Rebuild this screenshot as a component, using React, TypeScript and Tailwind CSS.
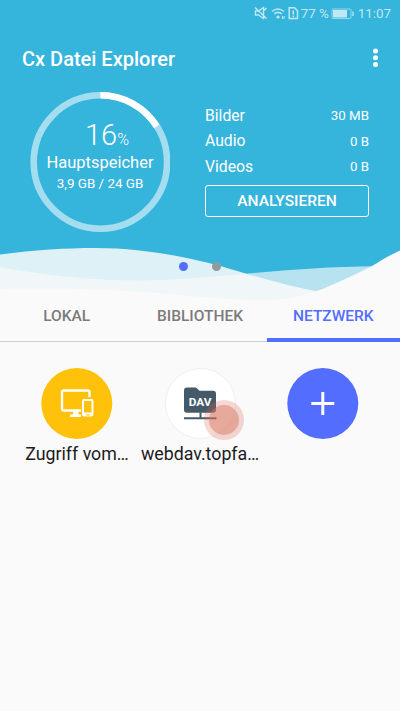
import { useState } from "react"

interface UsageItem {
  label: string
  value: string
}

const usage: UsageItem[] = [
  { label: "Bilder", value: "30 MB" },
  { label: "Audio", value: "0 B" },
  { label: "Videos", value: "0 B" },
]

const tabs = ["LOKAL", "BIBLIOTHEK", "NETZWERK"]

function StatusBar() {
  return (
    <div className="flex h-7 items-center justify-end pr-[9px] text-[13.4px] text-[#c1e7f3]">
      <svg width="47" height="16" viewBox="254 6 47 16" fill="none" stroke="currentColor" strokeWidth="1.2">
        {/* muted speaker */}
        <path d="M255.5 11h3l5-3.5v11l-5-3.5h-3zM255 7.500l11.500 11M266.500 8l-2.500 2.500" strokeWidth="1.400" />
        {/* wifi */}
        <path d="M272 11.500q6-5 12 0M274.300 14q3.700-3.300 7.500 0" strokeWidth="1.5" />
        <circle cx="278" cy="17" r="1.6" fill="currentColor" stroke="none" />
        <path d="M282.500 16v3M284 16v3" strokeWidth="1" />
        {/* sim warning */}
        <path d="M289.200 7.800h5.300l3 3v7.700h-8.300z" strokeWidth="1.500" />
        <path d="M293.300 10.500v4M293.300 15.500v1.500" strokeWidth="1.500" />
      </svg>
      <span className="w-[28px] whitespace-nowrap">77 %</span>
      <svg className="ml-[2px] mr-[3px]" width="24" height="12" viewBox="0 0 24 12" fill="none">
        <rect x="1" y="1" width="19" height="9.500" rx="1" stroke="currentColor" strokeOpacity="0.700" />
        <rect x="2" y="2" width="14" height="7.500" fill="currentColor" />
        <path d="M22 3.500v4.500" stroke="currentColor" strokeWidth="1.300" />
      </svg>
      <span>11:07</span>
    </div>
  )
}

function Waves() {
  return (
    <svg className="absolute left-0 top-[240px]" width="400" height="64" viewBox="0 240 400 64">
      <path
        d="M0 254.500C35 250 65 248 95 248C134 248 170 254 200 261C222 266 237 271 252 275.500C276 282 297 288 322 292L322 304H0z"
        fill="#fafafa"
        fillOpacity="0.860"
      />
      <path
        d="M0 267.500C40 274 86 280.500 140 280.500C205 280.500 285 266.500 376 266.200V304H0z"
        fill="#fafafa"
        fillOpacity="0.660"
      />
      <path
        d="M0 289C70 287.500 125 290 180 295C215 298.500 250 301.500 280 299.500C297 298 314 292.500 326 287.500C341 281 357 274 372 266C381 260.500 390 255 400 250.500V304H0z"
        fill="#fafafa"
      />
    </svg>
  )
}

function StorageRing({ percent }: { percent: number }) {
  const radius = 66.7
  const length = 2 * Math.PI * radius

  return (
    <div className="relative h-[140px] w-[140px]">
      <svg className="absolute inset-0" width="140" height="140" viewBox="0 0 140 140" fill="none">
        <circle cx="70.400" cy="70" r={radius} stroke="#fff" strokeOpacity="0.550" strokeWidth="6.600" />
        <circle
          cx="70.400"
          cy="70"
          r={radius}
          stroke="#fff"
          strokeWidth="6.600"
          strokeDasharray={`${(length * percent) / 100} ${length}`}
          transform="rotate(-90 70.4 70)"
        />
      </svg>
      <div className="relative flex flex-col items-center whitespace-nowrap pt-[26px]">
        <div className="ml-[14px] flex h-[34px] items-baseline leading-[34px]">
          <span className="text-[29px] font-light">{percent}</span>
          <span className="text-[16px] font-light">%</span>
        </div>
        <div className="text-[16.5px] leading-[22px]">Hauptspeicher</div>
        <div className="text-[13.4px] leading-[19px]">3,9 GB / 24 GB</div>
      </div>
    </div>
  )
}

export default function App() {
  const [active, setActive] = useState("NETZWERK")

  return (
    <div className="h-[711px] w-[400px] overflow-hidden bg-[#fafafa] font-['Roboto',sans-serif]">
      <header className="relative h-[291px] text-white">
        <div className="absolute inset-x-0 top-0 h-[304px] bg-[#35b4dc]" />
        <Waves />
        <div className="relative">
          <StatusBar />
          <div className="flex h-[60px] items-center justify-between pl-[22px] pr-[22px]">
            <h1 className="pt-px text-[20px] font-medium">Cx Datei Explorer</h1>
            <svg width="5" height="20" viewBox="0 0 5 20" fill="#fff">
              <circle cx="2.500" cy="3" r="2.500" />
              <circle cx="2.500" cy="9.700" r="2.500" />
              <circle cx="2.500" cy="16.400" r="2.500" />
            </svg>
          </div>
          <div className="flex pl-[30px] pt-[4px]">
            <StorageRing percent={16} />
            <div className="ml-[35px] w-[164px] pt-[11px]">
              {usage.map((item) => (
                <div key={item.label} className="flex h-[25.5px] items-center justify-between">
                  <span className="text-[15.7px]">{item.label}</span>
                  <span className="pt-px text-[13.3px]">{item.value}</span>
                </div>
              ))}
              <button className="mt-[5px] block h-[32px] w-full rounded-[3px] border border-white pt-[2px] text-[15.5px] font-medium">
                ANALYSIEREN
              </button>
            </div>
          </div>
          <div className="flex justify-center gap-[24px] pt-[30px]">
            <span className="h-[9px] w-[9px] rounded-full bg-[#536dfe]" />
            <span className="h-[9px] w-[9px] rounded-full bg-[#8f9b9f]" />
          </div>
        </div>
      </header>

      <nav className="relative flex h-[51px] border-b border-[#cfcfcf]">
        {tabs.map((tab) => (
          <button
            key={tab}
            onClick={() => setActive(tab)}
            className={`-mb-px h-[51px] flex-1 text-[15.5px] font-medium ${
              active === tab ? "border-b-4 border-[#536dfe] pt-[5px] text-[#536dfe]" : "pt-px text-[#7b7b7b]"
            }`}
          >
            {tab}
          </button>
        ))}
      </nav>

      <main className="flex pl-[15.5px] pt-[25.6px] text-[17.8px] text-[#1c1c1c]">
        <div className="flex w-[123px] flex-col items-center">
          <svg width="72" height="71" viewBox="41 368 72 71" fill="none" stroke="#fff">
            <circle cx="76.800" cy="403.500" r="35.500" fill="#ffc10a" stroke="none" />
            <path d="M81 410.500H64q-2 0-2-2V392.500q0-2 2-2H87.500q2 0 2 2V397" strokeWidth="2.400" />
            <path d="M70 415.800H81M75.500 410v5" strokeWidth="2.400" />
            <path d="M73 413.500h5.500" strokeWidth="5" />
            <rect x="83" y="400" width="9.500" height="15.500" rx="1.300" strokeWidth="2" />
            <path d="M83 400h9.500M83 413.500h9.500" strokeWidth="2.200" />
            <path d="M86.500 415h3" stroke="#ffc10a" />
          </svg>
          <span className="mt-[3px] whitespace-nowrap leading-[24px]">Zugriff vom…</span>
        </div>
        <div className="flex w-[123px] flex-col items-center">
          <div className="relative flex h-[71px] w-[71px] items-center justify-center rounded-full border border-[#f0f0f0] bg-white">
            <div className="relative h-[34px] w-[34px]">
              <svg className="absolute inset-0" width="34" height="34" viewBox="183 386 34 34" fill="#455a68">
                <path d="M187 387.500h9l3.500 3.200h13.500q3 0 3 3v16q0 3-3 3h-26q-3 0-3-3v-19q0-3.200 3-3.200z" />
                <path d="M199.500 412.500h2v5h-2zM184 417.300h32.500v1.900H184z" />
              </svg>
              <span className="relative block pt-[9px] text-center text-[11.8px] font-bold leading-[14px] text-white">
                DAV
              </span>
            </div>
            {/* touch marker */}
            <span className="absolute left-[38px] top-[31px] flex h-[40px] w-[40px] items-center justify-center rounded-full bg-[#d9604e]/25">
              <span className="h-[30px] w-[30px] rounded-full bg-[#d9705c]/45" />
            </span>
          </div>
          <span className="mt-[3px] whitespace-nowrap leading-[24px]">webdav.topfa…</span>
        </div>
        <div className="flex w-[123px] flex-col items-center">
          <svg width="72" height="71" viewBox="0 0 72 71" stroke="#fff" strokeWidth="3">
            <circle cx="35.800" cy="35.500" r="35.500" fill="#536dfe" stroke="none" />
            <path d="M35.800 24v23M24.300 35.500h23" />
          </svg>
        </div>
      </main>
    </div>
  )
}
